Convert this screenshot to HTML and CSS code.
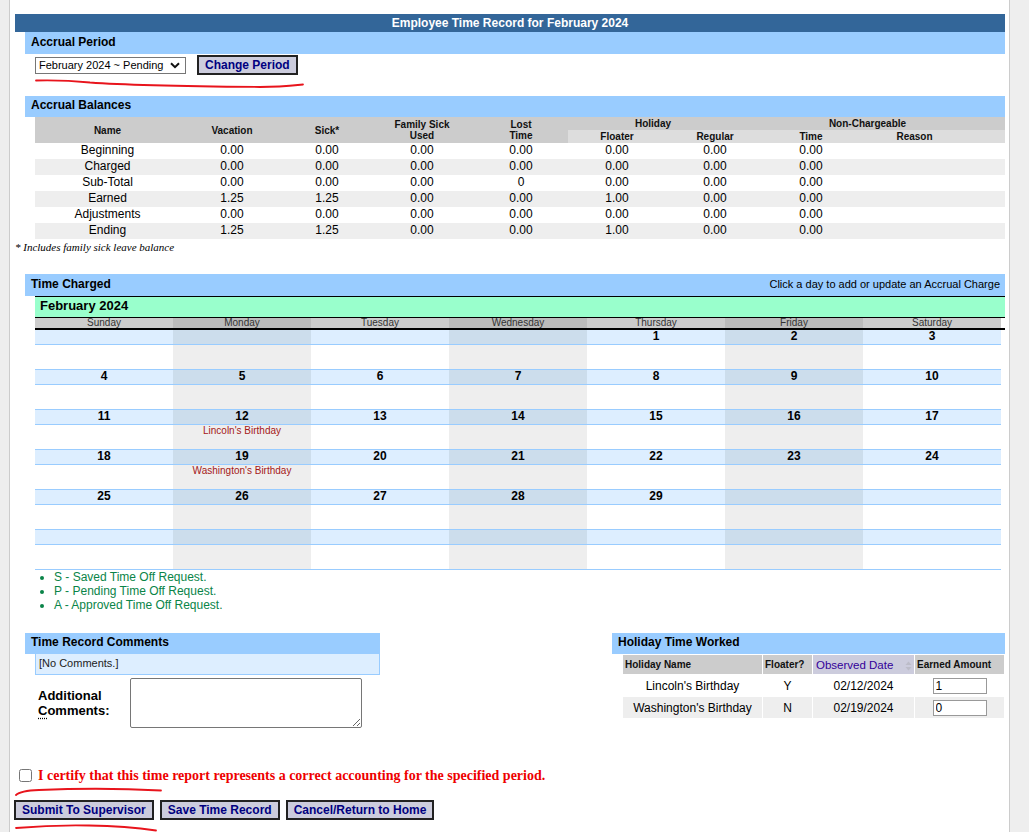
FILE: index.html
```html
<!DOCTYPE html>
<html lang="en">
<head>
<meta charset="utf-8">
<title>Employee Time Record</title>
<link rel="stylesheet" href="styles.css">
</head>
<body>
<div class="panel">
  <div class="title-bar">Employee Time Record for February 2024</div>

  <section class="sec">
    <div class="sec-head">Accrual Period</div>
    <div class="sec-body period">
      <div class="period-row">
        <div class="select-wrap">
          <select class="period-select"><option>February 2024 ~ Pending</option></select>
          <svg class="select-chevron" viewBox="0 0 10 7" aria-hidden="true"><path d="M1 1.2 L5 5.2 L9 1.2" fill="none" stroke="#111" stroke-width="2"/></svg>
        </div>
        <button class="btn">Change Period</button>
      </div>
      <svg class="mark mark-period" viewBox="0 0 270 10" aria-hidden="true"><path d="M1 1.5 C 20 1 40 2 55 3.5 C 95 6.5 170 7.5 225 8 C 245 8 258 6.5 268 5.5" fill="none" stroke="#e8141c" stroke-width="1.8" stroke-linecap="round"/></svg>
    </div>
  </section>

  <section class="sec">
    <div class="sec-head short">Accrual Balances</div>
    <div class="sec-body">
      <table class="bal">
        <colgroup>
          <col class="w145"><col class="w104"><col class="w86"><col class="w104"><col class="w94">
          <col class="w98"><col class="w98"><col class="w94"><col class="w147">
        </colgroup>
        <thead>
          <tr>
            <th rowspan="2">Name</th>
            <th rowspan="2">Vacation</th>
            <th rowspan="2">Sick*</th>
            <th rowspan="2">Family Sick<br>Used</th>
            <th rowspan="2">Lost<br>Time</th>
            <th colspan="2" class="hol-h">Holiday</th>
            <th colspan="2" class="nc-h">Non-Chargeable</th>
          </tr>
          <tr class="sub">
            <th>Floater</th>
            <th>Regular</th>
            <th>Time</th>
            <th class="reason">Reason</th>
          </tr>
        </thead>
        <tbody>
          <tr><td>Beginning</td><td>0.00</td><td>0.00</td><td>0.00</td><td>0.00</td><td>0.00</td><td>0.00</td><td>0.00</td><td></td></tr>
          <tr><td>Charged</td><td>0.00</td><td>0.00</td><td>0.00</td><td>0.00</td><td>0.00</td><td>0.00</td><td>0.00</td><td></td></tr>
          <tr><td>Sub-Total</td><td>0.00</td><td>0.00</td><td>0.00</td><td>0</td><td>0.00</td><td>0.00</td><td>0.00</td><td></td></tr>
          <tr><td>Earned</td><td>1.25</td><td>1.25</td><td>0.00</td><td>0.00</td><td>1.00</td><td>0.00</td><td>0.00</td><td></td></tr>
          <tr><td>Adjustments</td><td>0.00</td><td>0.00</td><td>0.00</td><td>0.00</td><td>0.00</td><td>0.00</td><td>0.00</td><td></td></tr>
          <tr><td>Ending</td><td>1.25</td><td>1.25</td><td>0.00</td><td>0.00</td><td>1.00</td><td>0.00</td><td>0.00</td><td></td></tr>
        </tbody>
      </table>
    </div>
  </section>
  <div class="footnote">* Includes family sick leave balance</div>

  <section class="sec charged">
    <div class="sec-head">Time Charged <span class="sec-hint">Click a day to add or update an Accrual Charge</span></div>
    <div class="sec-body">
      <div class="cal">
        <div class="cal-title">February 2024</div>
        <div class="cal-days">
          <div>Sunday</div><div>Monday</div><div>Tuesday</div><div>Wednesday</div><div>Thursday</div><div>Friday</div><div>Saturday</div>
        </div>

        <div class="week-nums"><div></div><div></div><div></div><div></div><div>1</div><div>2</div><div>3</div></div>
        <div class="week-body"><div></div><div></div><div></div><div></div><div></div><div></div><div></div></div>

        <div class="week-nums"><div>4</div><div>5</div><div>6</div><div>7</div><div>8</div><div>9</div><div>10</div></div>
        <div class="week-body"><div></div><div></div><div></div><div></div><div></div><div></div><div></div></div>

        <div class="week-nums"><div>11</div><div>12</div><div>13</div><div>14</div><div>15</div><div>16</div><div>17</div></div>
        <div class="week-body"><div></div><div>Lincoln's Birthday</div><div></div><div></div><div></div><div></div><div></div></div>

        <div class="week-nums"><div>18</div><div>19</div><div>20</div><div>21</div><div>22</div><div>23</div><div>24</div></div>
        <div class="week-body"><div></div><div>Washington's Birthday</div><div></div><div></div><div></div><div></div><div></div></div>

        <div class="week-nums"><div>25</div><div>26</div><div>27</div><div>28</div><div>29</div><div></div><div></div></div>
        <div class="week-body"><div></div><div></div><div></div><div></div><div></div><div></div><div></div></div>

        <div class="week-nums"><div></div><div></div><div></div><div></div><div></div><div></div><div></div></div>
        <div class="week-body"><div></div><div></div><div></div><div></div><div></div><div></div><div></div></div>
      </div>
      <ul class="legend">
        <li>S - Saved Time Off Request.</li>
        <li>P - Pending Time Off Request.</li>
        <li>A - Approved Time Off Request.</li>
      </ul>
    </div>
  </section>

  <div class="lower">
    <div class="comments">
      <div class="sec-head short">Time Record Comments</div>
      <div class="nocomments">[No Comments.]</div>
      <div class="addl">
        <label class="addl-label" for="addl">Additional<br><span class="ak">C</span>omments:</label>
        <textarea id="addl"></textarea>
      </div>
    </div>
    <div class="holidays">
      <div class="sec-head short">Holiday Time Worked</div>
      <table class="hol">
        <colgroup><col class="h139"><col class="h49"><col class="h101"><col class="h89"></colgroup>
        <thead>
          <tr>
            <th>Holiday Name</th>
            <th>Floater?</th>
            <th class="sorted">Observed Date<svg class="sort-icon" viewBox="0 0 7 10" aria-hidden="true"><path d="M0.5 4 L3.5 0.5 L6.5 4 Z" fill="#bcbcc8"/><path d="M0.5 6 L3.5 9.5 L6.5 6 Z" fill="#bcbcc8"/></svg></th>
            <th>Earned Amount</th>
          </tr>
        </thead>
        <tbody>
          <tr class="r1"><td>Lincoln's Birthday</td><td>Y</td><td>02/12/2024</td><td><input class="amt" type="text" value="1"></td></tr>
          <tr class="r2"><td>Washington's Birthday</td><td>N</td><td>02/19/2024</td><td><input class="amt" type="text" value="0"></td></tr>
        </tbody>
      </table>
    </div>
  </div>

  <div class="certify">
    <input type="checkbox" id="cert">
    <label for="cert">I certify that this time report represents a correct accounting for the specified period.</label>
  </div>
  <svg class="mark mark-certify" viewBox="0 0 150 10" aria-hidden="true"><path d="M2 9 C 5 6 12 4.5 25 4 C 60 2.5 110 2.5 147 4.5" fill="none" stroke="#e8141c" stroke-width="1.8" stroke-linecap="round"/></svg>
  <div class="actions">
    <button class="btn">Submit To Supervisor</button>
    <button class="btn">Save Time Record</button>
    <button class="btn">Cancel/Return to Home</button>
  </div>
  <svg class="mark mark-submit" viewBox="0 0 150 10" aria-hidden="true"><path d="M2 6 C 25 4 50 3 75 3.5 C 105 4 125 6 142 8.5" fill="none" stroke="#e8141c" stroke-width="1.8" stroke-linecap="round"/></svg>
</div>
</body>
</html>
```

FILE: styles.css
```css
* { box-sizing: border-box; }
html, body { margin: 0; padding: 0; }
body {
  background: #eeeeee;
  font-family: "Liberation Sans", Arial, sans-serif;
  font-size: 12px;
  color: #000;
}
.panel {
  margin-left: 9px;
  width: 1001px;
  min-height: 832px;
  background: #fff;
  border-left: 1px solid #cccccc;
  border-right: 1px solid #cccccc;
  padding: 14px 4px 0 5px;
}
.title-bar {
  height: 18px;
  line-height: 18px;
  background: #336699;
  color: #fff;
  font-weight: bold;
  font-size: 12px;
  text-align: center;
}
.sec { margin-left: 10px; }
.sec-head {
  height: 22px;
  line-height: 20px;
  background: #99ccff;
  font-weight: bold;
  font-size: 12px;
  padding: 0 5px 0 6px;
  display: flex;
  justify-content: space-between;
  color: #000;
}
.sec-head.short { height: 21px; line-height: 19px; }
.sec-hint { font-weight: normal; font-size: 11px; }
.sec-body { padding-left: 10px; }

/* Accrual period */
.period { height: 41px; }
.period-row {
  display: flex;
  align-items: center;
  gap: 11px;
  margin-top: 1px;
  height: 20px;
}
.select-wrap { position: relative; width: 151px; height: 17px; }
.period-select {
  appearance: none;
  -webkit-appearance: none;
  display: block;
  width: 151px;
  height: 17px;
  border: 1px solid #767676;
  border-radius: 0;
  background: #fff;
  font-family: "Liberation Sans", Arial, sans-serif;
  font-size: 11px;
  color: #000;
  padding: 0 0 0 3px;
  margin: 0;
}
.select-chevron {
  position: absolute;
  right: 6px;
  top: 5px;
  width: 10px;
  height: 7px;
  pointer-events: none;
}
.btn {
  height: 20px;
  padding: 0 6px;
  margin: 0;
  border: 2px solid #222;
  border-radius: 0;
  background: #ccccdd;
  color: #000080;
  font-family: "Liberation Sans", Arial, sans-serif;
  font-weight: bold;
  font-size: 12px;
  line-height: 16px;
}
.mark { display: block; }
.mark-period { margin-top: 4px; width: 270px; height: 10px; }

/* Balances table */
.bal {
  width: 970px;
  border-collapse: collapse;
  table-layout: fixed;
}
.w145 { width: 145px; }
.w104 { width: 104px; }
.w86 { width: 86px; }
.w94 { width: 94px; }
.w98 { width: 98px; }
.w147 { width: 147px; }
.bal thead tr { height: 13px; }
.bal th {
  background: #cccccc;
  font-size: 10px;
  font-weight: bold;
  line-height: 11px;
  padding: 0;
  text-align: center;
  color: #111;
}
.bal .sub th { background: #dddddd; }
.bal th.hol-h { padding-right: 26px; }
.bal th.nc-h, .bal th.reason { padding-right: 34px; }
.bal tbody tr { height: 16px; }
.bal td {
  padding: 0;
  text-align: center;
  vertical-align: top;
  font-size: 12px;
  line-height: 14px;
}
.bal tbody tr:nth-child(even) td { background: #eeeeee; }
.footnote {
  font-family: "Liberation Serif", "Times New Roman", serif;
  font-style: italic;
  font-size: 11px;
  line-height: 16px;
  height: 16px;
}

/* Calendar */
.charged { margin-top: 19px; }
.cal { width: 970px; }
.cal-title {
  height: 22px;
  border-top: 1px solid #000;
  border-bottom: 1px solid #000;
  background: #99ffcc;
  font-weight: bold;
  font-size: 13px;
  line-height: 18px;
  padding-left: 5px;
}
.cal-days {
  display: grid;
  grid-template-columns: repeat(7, 138px);
  border-bottom: 2px solid #000;
}
.cal-days div {
  height: 10px;
  line-height: 10px;
  font-size: 10px;
  text-align: center;
  color: #333;
  background: #cccccc;
}
.cal-days div:nth-child(even) { background: #bbbbbb; }
.week-nums, .week-body {
  display: grid;
  grid-template-columns: repeat(7, 138px);
  width: 966px;
  border-bottom: 1px solid #99ccff;
}
.week-nums div {
  height: 14px;
  line-height: 12px;
  font-weight: bold;
  font-size: 12px;
  text-align: center;
  background: #ddeeff;
}
.week-nums div:nth-child(even) { background: #ccddec; }
.week-body div {
  height: 24px;
  font-size: 10px;
  line-height: 12px;
  text-align: center;
  color: #a51818;
}
.week-body div:nth-child(even) { background: #eeeeee; }
.legend {
  margin: 0;
  padding-left: 19px;
  color: #0a8448;
  font-size: 12px;
  line-height: 14px;
}

/* Lower boxes */
.lower {
  display: flex;
  justify-content: space-between;
  align-items: flex-start;
  margin-top: 21px;
}
.comments { margin-left: 10px; width: 355px; }
.nocomments {
  margin-left: 10px;
  height: 21px;
  border: 1px solid #99ccff;
  border-top: 0;
  background: #ddeeff;
  font-size: 11px;
  line-height: 18px;
  padding-left: 3px;
  color: #222;
}
.addl {
  display: flex;
  align-items: center;
  margin: 3px 0 0 10px;
}
.addl-label {
  width: 95px;
  padding-left: 3px;
  font-weight: bold;
  font-size: 13px;
  line-height: 15px;
}
.ak { text-decoration: underline dotted; text-underline-offset: 3px; }
.addl textarea {
  width: 232px;
  height: 50px;
  margin: 0;
  border: 1px solid #767676;
  border-radius: 2px;
  font-family: "Liberation Mono", monospace;
  font-size: 12px;
}
.holidays { width: 393px; }
.hol {
  margin-left: 10px;
  width: 383px;
  border-collapse: separate;
  border-spacing: 1px;
  table-layout: fixed;
}
.h139 { width: 139px; }
.h49 { width: 49px; }
.h101 { width: 101px; }
.h89 { width: 89px; }
.hol thead tr { height: 19px; }
.hol th {
  background: #cccccc;
  font-size: 10px;
  font-weight: bold;
  line-height: 12px;
  text-align: left;
  padding: 0 0 0 2px;
  color: #111;
  white-space: nowrap;
}
.hol th.sorted {
  background: #ccccdd;
  color: #330099;
  font-weight: normal;
  font-size: 11.5px;
  padding-left: 3px;
}
.sort-icon {
  float: right;
  width: 7px;
  height: 10px;
  margin: 2px 2px 0 0;
}
.hol td {
  text-align: center;
  font-size: 12px;
  line-height: 14px;
  padding: 0;
}
.hol tr.r1 { height: 21px; }
.hol tr.r2 { height: 21px; }
.hol tr.r1 td { background: #fff; }
.hol tr.r2 td { background: #eeeeee; }
.amt {
  display: block;
  margin: 0 auto;
  width: 54px;
  height: 16px;
  border: 1px solid #999;
  padding: 0 2px;
  font-family: "Liberation Sans", Arial, sans-serif;
  font-size: 12px;
  background: #fff;
}

/* Certify and actions */
.certify {
  display: flex;
  align-items: center;
  margin-top: 39px;
  height: 17px;
}
.certify input {
  width: 13px;
  height: 13px;
  margin: 0 6px 0 4px;
}
.certify label {
  font-family: "Liberation Serif", "Times New Roman", serif;
  font-weight: bold;
  font-size: 14px;
  color: #ee0000;
}
.mark-certify { width: 150px; height: 10px; margin: 2px 0 0 -1px; }
.actions {
  display: flex;
  gap: 6px;
  margin: 4px 0 0 -1px;
}
.mark-submit { width: 150px; height: 10px; margin: 2px 0 0 -1px; }
```
